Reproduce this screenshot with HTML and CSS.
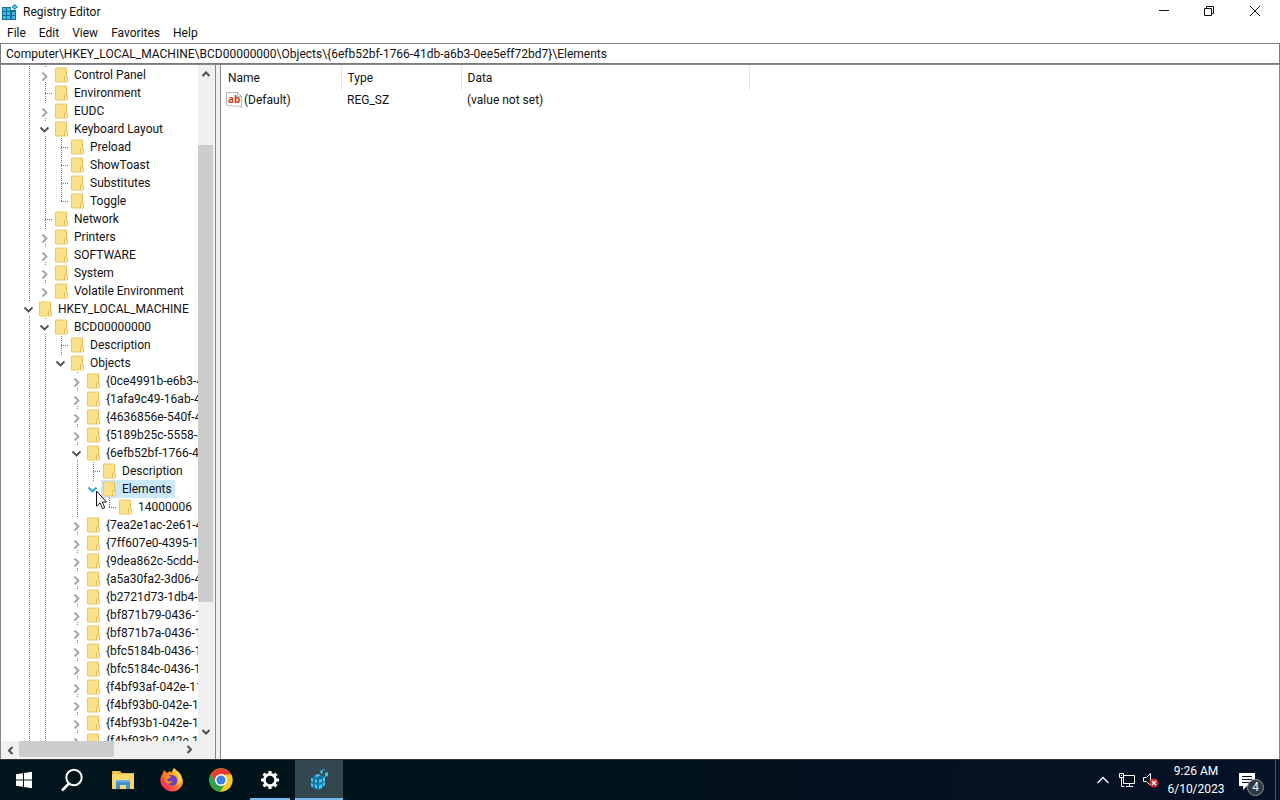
FILE: index.html
```html
<!DOCTYPE html>
<html lang="en">
<head>
<meta charset="utf-8">
<title>Registry Editor</title>
<link rel="stylesheet" href="styles.css">
</head>
<body>
<svg class="defs" aria-hidden="true">
  <symbol id="folder" viewBox="0 0 16 18">
    <path d="M2.500 2h11v9h1v5h-12z" fill="#fce18b" stroke="#ecca68"/>
    <path d="M11.500 16v-5h2v-8.500" fill="none" stroke="#e8bf50"/>
    <path d="M12 11.500h2v4h-2z" fill="#fdeaa8"/>
  </symbol>
  <symbol id="right" viewBox="0 0 16 18"><path d="M5.500 6.500l4 4-4 4" fill="none" stroke="#a3a3a3" stroke-width="1.900"/></symbol>
  <symbol id="down" viewBox="0 0 16 18"><path d="M3.500 7.500l4 4 4-4" fill="none" stroke="currentColor" stroke-width="1.800"/></symbol>
  <symbol id="arrow" viewBox="0 0 16 16"><path d="M4.500 10L8 6.500l3.500 3.500" fill="none" stroke="#505050" stroke-width="2"/></symbol>
</svg>

<header class="titlebar">
  <svg class="app-icon" viewBox="0 0 16 16" aria-hidden="true">
    <path d="M0 3h9v3h5v10H0z" fill="#156f96"/>
    <path d="M1 4h3v3H1zM5 4h3v3H5zM1 8h3v3H1zM5 8h3v3H5zM10 8h3v3h-3zM1 12h3v3H1zM5 12h3v3H5zM10 12h3v3h-3z" fill="#36bdea"/>
    <path d="M12.500 0L16 3l-3.500 3L9.500 3z" fill="#2688b0"/><path d="M12.500 1.500L14.300 3l-1.800 1.500L11 3z" fill="#67d0f0"/>
  </svg>
  <h1>Registry Editor</h1>
  <div class="window-buttons">
    <button aria-label="Minimize"><svg viewBox="0 0 12 12"><path d="M2 4.500h10"/></svg></button>
    <button aria-label="Restore"><svg viewBox="0 0 12 12"><path d="M1.500 2.500h7v7h-7zM3.500 2.500v-2h7v7h-2"/></svg></button>
    <button aria-label="Close"><svg viewBox="0 0 12 12"><path d="M1 0l10 10M11 0L1 10"/></svg></button>
  </div>
</header>
<nav class="menubar" aria-label="Menu">
  <button>File</button><button>Edit</button><button>View</button><button>Favorites</button><button>Help</button>
</nav>
<input class="address" type="text" aria-label="Key path" value="Computer\HKEY_LOCAL_MACHINE\BCD00000000\Objects\{6efb52bf-1766-41db-a6b3-0ee5eff72bd7}\Elements">

<main class="panes">
  <section class="tree-pane" aria-label="Keys">
    <div class="tree">
      <ul>
        <li><ul>
          <li><div class="row"><button aria-label="Expand"><svg><use href="#right"/></svg></button><svg><use href="#folder"/></svg><span>Control Panel</span></div></li>
          <li><div class="row leaf"><svg><use href="#folder"/></svg><span>Environment</span></div></li>
          <li><div class="row"><button aria-label="Expand"><svg><use href="#right"/></svg></button><svg><use href="#folder"/></svg><span>EUDC</span></div></li>
          <li><div class="row"><button aria-label="Collapse"><svg><use href="#down"/></svg></button><svg><use href="#folder"/></svg><span>Keyboard Layout</span></div>
            <ul>
              <li><div class="row leaf"><svg><use href="#folder"/></svg><span>Preload</span></div></li>
              <li><div class="row leaf"><svg><use href="#folder"/></svg><span>ShowToast</span></div></li>
              <li><div class="row leaf"><svg><use href="#folder"/></svg><span>Substitutes</span></div></li>
              <li><div class="row leaf"><svg><use href="#folder"/></svg><span>Toggle</span></div></li>
            </ul>
          </li>
          <li><div class="row leaf"><svg><use href="#folder"/></svg><span>Network</span></div></li>
          <li><div class="row"><button aria-label="Expand"><svg><use href="#right"/></svg></button><svg><use href="#folder"/></svg><span>Printers</span></div></li>
          <li><div class="row"><button aria-label="Expand"><svg><use href="#right"/></svg></button><svg><use href="#folder"/></svg><span>SOFTWARE</span></div></li>
          <li><div class="row"><button aria-label="Expand"><svg><use href="#right"/></svg></button><svg><use href="#folder"/></svg><span>System</span></div></li>
          <li><div class="row"><button aria-label="Expand"><svg><use href="#right"/></svg></button><svg><use href="#folder"/></svg><span>Volatile Environment</span></div></li>
        </ul></li>
        <li class="open"><div class="row"><button aria-label="Collapse"><svg><use href="#down"/></svg></button><svg><use href="#folder"/></svg><span>HKEY_LOCAL_MACHINE</span></div>
          <ul>
            <li class="open"><div class="row"><button aria-label="Collapse"><svg><use href="#down"/></svg></button><svg><use href="#folder"/></svg><span>BCD00000000</span></div>
              <ul>
                <li><div class="row leaf"><svg><use href="#folder"/></svg><span>Description</span></div></li>
                <li><div class="row"><button aria-label="Collapse"><svg><use href="#down"/></svg></button><svg><use href="#folder"/></svg><span>Objects</span></div>
                  <ul>
                    <li><div class="row"><button aria-label="Expand"><svg><use href="#right"/></svg></button><svg><use href="#folder"/></svg><span>{0ce4991b-e6b3-4</span></div></li>
                    <li><div class="row"><button aria-label="Expand"><svg><use href="#right"/></svg></button><svg><use href="#folder"/></svg><span>{1afa9c49-16ab-4</span></div></li>
                    <li><div class="row"><button aria-label="Expand"><svg><use href="#right"/></svg></button><svg><use href="#folder"/></svg><span>{4636856e-540f-4</span></div></li>
                    <li><div class="row"><button aria-label="Expand"><svg><use href="#right"/></svg></button><svg><use href="#folder"/></svg><span>{5189b25c-5558-4</span></div></li>
                    <li><div class="row"><button aria-label="Collapse"><svg><use href="#down"/></svg></button><svg><use href="#folder"/></svg><span>{6efb52bf-1766-4</span></div>
                      <ul>
                        <li><div class="row leaf"><svg><use href="#folder"/></svg><span>Description</span></div></li>
                        <li><div class="row selected"><button aria-label="Collapse"><svg><use href="#down"/></svg></button><svg><use href="#folder"/></svg><span>Elements</span></div>
                          <ul>
                            <li><div class="row leaf"><svg><use href="#folder"/></svg><span>14000006</span></div></li>
                          </ul>
                        </li>
                      </ul>
                    </li>
                    <li><div class="row"><button aria-label="Expand"><svg><use href="#right"/></svg></button><svg><use href="#folder"/></svg><span>{7ea2e1ac-2e61-4</span></div></li>
                    <li><div class="row"><button aria-label="Expand"><svg><use href="#right"/></svg></button><svg><use href="#folder"/></svg><span>{7ff607e0-4395-11</span></div></li>
                    <li><div class="row"><button aria-label="Expand"><svg><use href="#right"/></svg></button><svg><use href="#folder"/></svg><span>{9dea862c-5cdd-4</span></div></li>
                    <li><div class="row"><button aria-label="Expand"><svg><use href="#right"/></svg></button><svg><use href="#folder"/></svg><span>{a5a30fa2-3d06-4</span></div></li>
                    <li><div class="row"><button aria-label="Expand"><svg><use href="#right"/></svg></button><svg><use href="#folder"/></svg><span>{b2721d73-1db4-4</span></div></li>
                    <li><div class="row"><button aria-label="Expand"><svg><use href="#right"/></svg></button><svg><use href="#folder"/></svg><span>{bf871b79-0436-1</span></div></li>
                    <li><div class="row"><button aria-label="Expand"><svg><use href="#right"/></svg></button><svg><use href="#folder"/></svg><span>{bf871b7a-0436-1</span></div></li>
                    <li><div class="row"><button aria-label="Expand"><svg><use href="#right"/></svg></button><svg><use href="#folder"/></svg><span>{bfc5184b-0436-1</span></div></li>
                    <li><div class="row"><button aria-label="Expand"><svg><use href="#right"/></svg></button><svg><use href="#folder"/></svg><span>{bfc5184c-0436-1</span></div></li>
                    <li><div class="row"><button aria-label="Expand"><svg><use href="#right"/></svg></button><svg><use href="#folder"/></svg><span>{f4bf93af-042e-11</span></div></li>
                    <li><div class="row"><button aria-label="Expand"><svg><use href="#right"/></svg></button><svg><use href="#folder"/></svg><span>{f4bf93b0-042e-1</span></div></li>
                    <li><div class="row"><button aria-label="Expand"><svg><use href="#right"/></svg></button><svg><use href="#folder"/></svg><span>{f4bf93b1-042e-1</span></div></li>
                    <li><div class="row"><button aria-label="Expand"><svg><use href="#right"/></svg></button><svg><use href="#folder"/></svg><span>{f4bf93b2-042e-1</span></div></li>
                  </ul>
                </li>
              </ul>
            </li>
          </ul>
        </li>
      </ul>
      <svg class="cursor" viewBox="0 0 12 20" aria-hidden="true"><path d="M1.500 1v15.200l3.500-3.300 2.500 5.800 2.300-1-2.500-5.600h4.200z" fill="#fff" stroke="#111"/></svg>
    </div>
    <div class="vscroll">
      <button aria-label="Scroll up"><svg><use href="#arrow"/></svg></button>
      <div class="vtrack"><div class="vthumb"></div></div>
      <button class="turn-down" aria-label="Scroll down"><svg><use href="#arrow"/></svg></button>
    </div>
    <div class="hscroll">
      <button class="turn-left" aria-label="Scroll left"><svg><use href="#arrow"/></svg></button>
      <div class="htrack"><div class="hthumb"></div></div>
      <button class="turn-right" aria-label="Scroll right"><svg><use href="#arrow"/></svg></button>
    </div>
  </section>
  <div class="splitter"></div>
  <section class="values" aria-label="Values">
    <table>
      <thead><tr><th class="name">Name</th><th class="type">Type</th><th class="data">Data</th></tr></thead>
      <tbody><tr>
        <td class="name"><div class="value-name"><svg viewBox="0 0 16 16" aria-hidden="true"><path d="M.5.500h11l4 4v11l-2-1.500-2 1-2-1.500-2 1-2-1.500-2 1-3-1z" fill="#fff" stroke="#b5b5b5"/><path d="M11.500.500v4h4" fill="none" stroke="#b5b5b5"/><text x="2" y="11">ab</text></svg><span>(Default)</span></div></td>
        <td>REG_SZ</td><td>(value not set)</td>
      </tr></tbody>
    </table>
  </section>
</main>

<footer class="taskbar">
  <button aria-label="Start"><svg viewBox="0 0 24 24"><path d="M4 6.200l7-1v6.300H4zM12 5l8-1.200v7.700h-8zM4 12.500h7v6.300l-7-1zM12 12.500h8v7.700L12 19z" fill="#fff"/></svg></button>
  <button class="search" aria-label="Search"><svg viewBox="0 0 24 24"><path d="M8 15.500L1 22.500" stroke="#fff" stroke-width="2.500"/><circle cx="13" cy="9.500" r="7.700" fill="none" stroke="#fff" stroke-width="2"/></svg></button>
  <button aria-label="File Explorer"><svg viewBox="0 0 24 24"><path d="M1 3h8l2 2h12v16H1z" fill="#e9b13d"/><path d="M1 6h22v15H1z" fill="#fbd66d"/><path d="M5 12h14v9h-4v-4H9v4H5z" fill="#3b92cf"/><path d="M5 12h14v2H5z" fill="#68b5e4"/><path d="M3 4h3v1H3z" fill="#fff0a0"/></svg></button>
  <button aria-label="Firefox"><svg viewBox="0 0 24 24">
    <defs><linearGradient id="fox" x1="1" y1="0" x2="0" y2="1"><stop offset=".1" stop-color="#fff04b"/><stop offset=".45" stop-color="#ff8b25"/><stop offset=".75" stop-color="#ff3c50"/><stop offset="1" stop-color="#e31587"/></linearGradient></defs>
    <path d="M3 5l1-3 3 3 3-2 1 2 3-5c2 3 5 3 7 7 2 5 3 8 0 12-4 6-13 6-18 0C-1 14 0 9 3 5z" fill="url(#fox)"/>
    <path d="M8 8c3-2 8-1 9 3 1 5-3 8-7 6-3-1-4-4-3-6l4-1z" fill="#6740c9"/><path d="M4 8c3-1 4 0 7 0-1 2-3 2-4 3 0 3 4 3 6 2-2 4-7 3-8 0z" fill="#ff8d22"/><path d="M14 0c-1 4 2 4 4 8 2 5 0 8-2 10 5-3 7-8 4-12-1-2-4-3-6-6z" fill="#ffd83f"/></svg></button>
  <button aria-label="Chrome"><svg viewBox="0 0 24 24"><circle cx="12" cy="12" r="11.700" fill="#fbc91b"/><path d="M1.900 6.100A11.700 11.700 0 0 1 22.200 6.500H12a5.500 5.500 0 0 0-4.800 8.200z" fill="#e63c30"/><path d="M1.900 6.100A11.700 11.700 0 0 0 11.200 23.700l5.500-8.900a5.500 5.500 0 0 1-9.500 0z" fill="#2ea04c"/><circle cx="12" cy="12" r="6" fill="#fff"/><circle cx="12" cy="12" r="4.600" fill="#3c7ee8"/></svg></button>
  <button class="running settings" aria-label="Settings"><svg viewBox="0 0 24 24"><circle cx="12" cy="12" r="5.600" fill="none" stroke="#fff" stroke-width="2.600"/><path d="M12 3v3M12 18v3M3 12h3M18 12h3M5.600 5.600l2.200 2.200M16.200 16.200l2.200 2.200M18.400 5.600l-2.200 2.200M7.800 16.200l-2.200 2.200" stroke="#fff" stroke-width="3.200"/></svg></button>
  <button class="running active" aria-label="Registry Editor"><svg viewBox="0 0 24 24"><path d="M4 10l4-2 4-1 6 1v10l-6 4-8-3z" fill="#1777a3"/><path d="M4 10l2 1v3l-2-1zM8 11l2 1v3l-2-1zM12 12l3-1v3l-3 1zM4 15l2 1v3l-2-1zM8 16l2 1v4l-2-1zM12 17l3-1v4l-3 1zM16 10l2-1v4l-2 1zM16 15l2-1v3l-2 1zM7 8l4-2 3 1-4 2z" fill="#4cc3f2"/><path d="M13 3l2-1 1 3-2 1zM18 5l3-1v4l-3 1z" fill="#47bce9"/><path d="M15 1h3v2h-3z" fill="#1e86b2"/></svg></button>
  <div class="tray">
    <button class="chevron" aria-label="Show hidden icons"><svg viewBox="0 0 18 16"><path d="M3.500 11L9 5.500l5.500 5.500" fill="none" stroke="#fff" stroke-width="1.300"/></svg></button>
    <button aria-label="Network"><svg viewBox="0 0 18 16"><path d="M5.500 3.500h11v8h-11zM8 14.500h7M11.500 11.500v3M3.500 6v8.500h3" fill="none" stroke="#fff"/><path d="M1.500 1.500h4v4h-4z" fill="#0a1420" stroke="#fff"/><path d="M3 3h1v1H3z" fill="#fff"/></svg></button>
    <button aria-label="Volume muted"><svg viewBox="0 0 18 16"><path d="M1.500 5.500h3l4-4v12l-4-4h-3z" fill="none" stroke="#fff"/><circle cx="12" cy="11" r="4.600" fill="#c92a31"/><path d="M10 9l4 4M14 9l-4 4" stroke="#fff" stroke-width="1.300"/></svg></button>
    <button class="clock"><time datetime="2023-06-10T09:26"><span>9:26 AM</span><span>6/10/2023</span></time></button>
    <button class="notifications" aria-label="4 notifications"><svg viewBox="0 0 24 24"><path d="M1 2h16v13H9l-4 4v-4H1z" fill="#fff"/><path d="M4 5.500h10M4 8.500h10M4 11.500h7" stroke="#0a1420"/></svg><span class="badge">4</span></button>
    <button class="desktop" aria-label="Show desktop"></button>
  </div>
</footer>
</body>
</html>
```

FILE: styles.css
```css
* { box-sizing: border-box; }

body {
  margin: 0;
  height: 100vh;
  display: flex;
  flex-direction: column;
  overflow: hidden;
  background: #fff;
  color: #111;
  font: 12px/18px Roboto, "Open Sans", sans-serif;
}

button {
  flex: none;
  border: 0;
  padding: 0;
  background: none;
  color: inherit;
  font: inherit;
}

svg { display: block; flex: none; }
.defs { display: none; }

.titlebar { display: flex; align-items: center; height: 24px; padding-left: 2px; }
.app-icon { width: 16px; height: 16px; }
.titlebar h1 { margin: 0 0 0 5px; font-size: 12px; font-weight: 400; }
.window-buttons { display: flex; margin-left: auto; padding-right: 2px; }
.window-buttons button {
  display: grid;
  place-items: center;
  width: 46px;
  height: 22px;
}
.window-buttons svg { width: 12px; height: 12px; fill: none; stroke: #111; }

.menubar { display: flex; height: 19px; }
.menubar button { height: 18px; padding: 0 6px 0 7px; }

.address {
  flex: none;
  width: 100%;
  height: 21px;
  border: 1px solid #7a7a7a;
  padding: 0 5px;
  outline: 0;
  background: #fff;
  color: #111;
  font: inherit;
}

.panes {
  flex: 1;
  display: flex;
  min-height: 0;
  border: 1px solid #828790;
  border-bottom: 0;
}

.tree-pane {
  flex: none;
  width: 215px;
  display: grid;
  grid-template: minmax(0, 1fr) 17px / minmax(0, 1fr) 17px;
  padding-bottom: 1px;
  border-right: 1px solid #828790;
  background: #f0f0f0;
}

.tree {
  position: relative;
  overflow: hidden;
  padding: 1px 0 0 20px;
  background: #fff;
}
.tree ul { margin: 0; padding: 0; list-style: none; }
.tree ul ul { padding-left: 16px; }
.tree li {
  background: repeating-linear-gradient(#777 0 1px, transparent 1px 2px) 8px 0 / 1px 100% no-repeat;
}
.tree ul ul li:last-child { background-size: 1px 9px; }
.tree ul li.open:last-child { background-size: 1px 100%; }

.row { display: flex; align-items: center; height: 18px; white-space: nowrap; }
.row svg { width: 16px; height: 18px; }
.row button { width: 16px; height: 14px; background: #fff; color: #505050; overflow: hidden; }
.row button svg { margin: -2px 0; }
.row span { padding: 0 3px 0 5px; }
.leaf::before {
  content: "";
  flex: none;
  width: 8px;
  height: 1px;
  margin-left: 8px;
  background: repeating-linear-gradient(90deg, #777 0 1px, transparent 1px 2px);
}
.selected button { color: #20a5d8; }
.selected > svg, .selected span { background: #cce8ff; }

.cursor { position: absolute; left: 94px; top: 425px; width: 12px; height: 20px; }

.vscroll { display: flex; flex-direction: column; padding-right: 1px; }
.vscroll button, .hscroll button { width: 16px; height: 17px; }
.vscroll button svg, .hscroll button svg { width: 16px; height: 16px; }
.vtrack { flex: 1; padding-top: 63px; }
.vthumb { height: 79%; margin-right: 1px; background: #cdcdcd; }
.hscroll { display: flex; grid-column: 1; }
.hscroll .turn-left { width: 18px; }
.htrack { flex: 1; }
.hthumb { width: 58%; height: 16px; background: #cdcdcd; }
.turn-down { transform: rotate(180deg); }
.turn-left { transform: rotate(-90deg); }
.turn-right { transform: rotate(90deg); }

.splitter { flex: none; width: 5px; border-right: 1px solid #828790; background: #f0f0f0; }

.values { flex: 1; min-width: 0; }
.values table { width: 529px; border-collapse: collapse; table-layout: fixed; }
.values th, .values td { padding: 0 6px; text-align: left; font-weight: 400; }
.values th { height: 25px; border-right: 1px solid #e5e5e5; }
.values td { height: 20px; }
.values .name { width: 120px; }
.values th.name { padding-left: 7px; }
.values .type { width: 120px; }
.values td.name { padding-left: 5px; }
.value-name { display: flex; align-items: center; gap: 2px; }
.value-name svg { width: 16px; height: 16px; }
.value-name text { fill: #c63d22; font: 700 10px "Open Sans", sans-serif; }

.taskbar { flex: none; display: flex; height: 41px; border-top: 1px solid #2c383c; background: linear-gradient(90deg, #00151c, #02121b 50%, #061226); color: #fff; }
.taskbar > button { display: grid; place-items: center; width: 48px; margin-right: 1px; padding-top: 1px; border-bottom: 2px solid transparent; }
.taskbar > button svg { width: 24px; height: 24px; }
.taskbar > .search { margin-right: 2px; }
.taskbar > .running { border-bottom-color: #76b9ed; }
.taskbar > .settings { width: 40px; margin: 0 5px 0 4px; }
.taskbar > .active { background: #33474f; }

.tray { display: flex; align-items: center; margin-left: auto; }
.tray svg { width: 18px; height: 16px; }
.tray button { margin-right: 6px; }
.tray .clock { width: 60px; margin-right: 12px; }
.clock span { display: block; }
.tray .notifications { position: relative; width: 28px; height: 32px; margin-right: 9px; }
.notifications svg { width: 24px; height: 24px; margin-top: 6px; }
.badge {
  position: absolute;
  right: 2px;
  bottom: 0;
  width: 17px;
  height: 17px;
  border: 1px solid #8c949c;
  border-radius: 50%;
  background: #303942;
  line-height: 15px;
  text-align: center;
}
.tray .desktop { align-self: stretch; width: 5px; margin-right: 0; border-left: 1px solid #4a545e; }
```
